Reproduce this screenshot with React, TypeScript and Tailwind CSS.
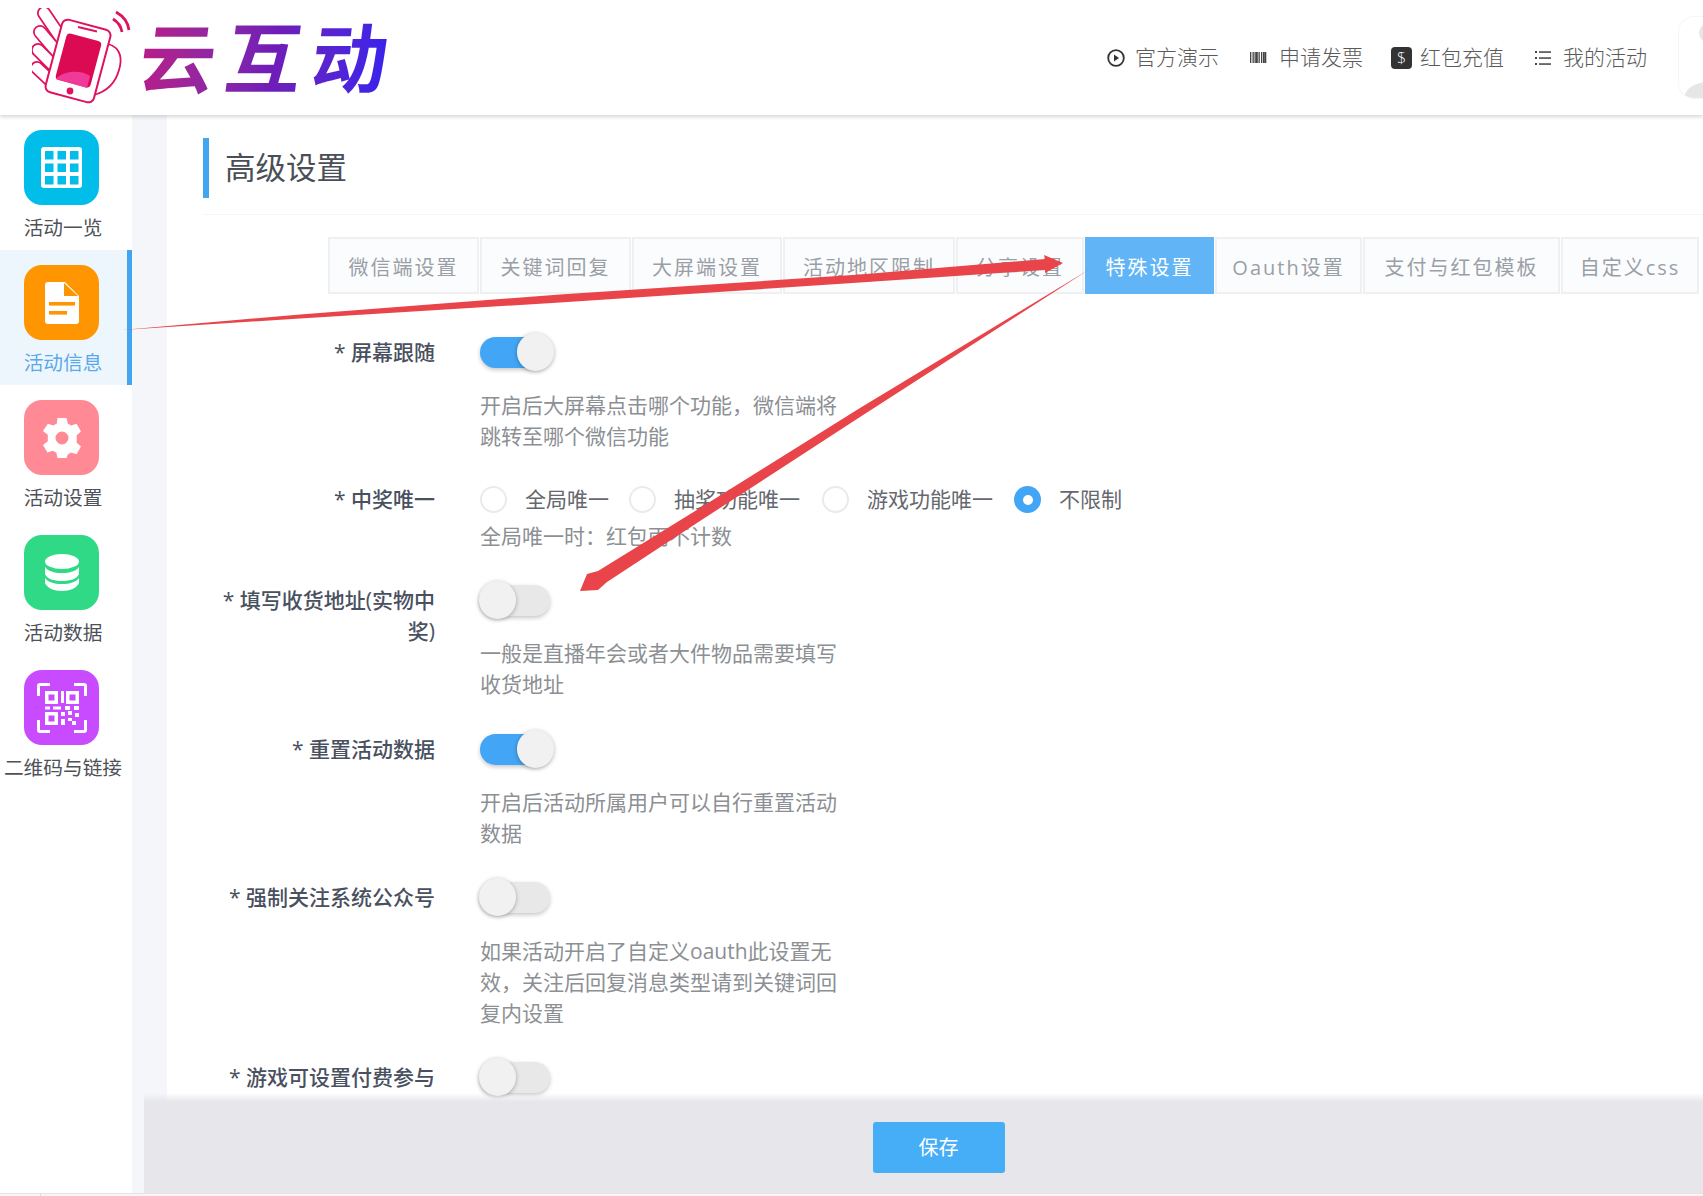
import React from "react";

const Tile = ({ color, children }: { color: string; children: React.ReactNode }) => (
  <div className={`flex h-[75px] w-[75px] items-center justify-center rounded-[18px] ${color}`}>{children}</div>
);

const GridIcon = () => (
  <svg width="41" height="41" viewBox="0 0 41 41">
    <rect width="41" height="41" rx="3" fill="#fff" />
    {[4, 16.5, 29].map((y) =>
      [4, 16.5, 29].map((x) => <rect key={`${x}-${y}`} x={x} y={y} width="8.5" height="8.5" fill="#00bdea" />)
    )}
  </svg>
);
const DocIcon = () => (
  <svg width="34" height="42" viewBox="0 0 34 42">
    <path d="M3 0H20L34 14V39a3 3 0 0 1-3 3H3a3 3 0 0 1-3-3V3a3 3 0 0 1 3-3Z" fill="#fff" />
    <path d="M19 1L33 14H19Z" fill="#ff9500" />
    <rect x="4" y="20" width="26" height="3.6" fill="#ff9500" />
    <rect x="4" y="29" width="18" height="3.6" fill="#ff9500" />
  </svg>
);
const GearIcon = () => (
  <svg width="42" height="42" viewBox="0 0 42 42">
    <path
      fill="#fff"
      fillRule="evenodd"
      d="M16.5 1h9l1.2 5.6 3.4 2 5.5-1.8 4.4 7.6-4.3 3.8v7.600l4.300 3.800-4.400 7.600-5.500-1.800-3.400 2L25.500 41h-9l-1.200-5.200-3.400-2-5.500 1.800L2 28l4.800-3.800v-6.400L2 14l4.900-7.200 5.500 1.800 3.400-2L16.500 1ZM21 14.500a6.500 6.500 0 1 0 0 13 6.500 6.500 0 0 0 0-13Z"
    />
  </svg>
);
const DbIcon = () => (
  <svg width="34" height="37" viewBox="0 0 34 37">
    <ellipse cx="17" cy="7.5" rx="17" ry="7.5" fill="#fff" />
    <path d="M0 13c3 4 9 6 17 6s14-2 17-6v7c-2 5-9 7-17 7s-15-2-17-7Z" fill="#fff" />
    <path d="M0 24c3 4 9 6 17 6s14-2 17-6v5c-2 5-9 8-17 8s-15-3-17-8Z" fill="#fff" />
  </svg>
);
const QrIcon = () => (
  <svg width="50" height="50" viewBox="0 0 50 50" fill="#fff">
    <path d="M0 13V3a3 3 0 0 1 3-3h10v3H3v10ZM37 0h10a3 3 0 0 1 3 3v10h-3V3H37ZM0 37h3v10h10v3H3a3 3 0 0 1-3-3ZM47 37h3v10a3 3 0 0 1-3 3H37v-3h10Z" />
    <path fillRule="evenodd" d="M8 8h13v13H8Zm3.500 3.500v6h6v-6ZM29 8h13v13H29Zm3.500 3.500v6h6v-6ZM8 29h13v13H8Zm3.500 3.500v6h6v-6Z" />
    <path d="M24 8h3v12h-3ZM8 23.500h5v3H8ZM16 23.500h8v3h-8ZM28 23h5v4h-5ZM37 23h5v4h-5ZM24 29h4v4h-4ZM31 28h4v4h-4ZM38 30h4v4h-4ZM24 36h4v6h-4ZM31 35h4v3h-4ZM35 38h4v4h-4Z" />
  </svg>
);

const nav = [
  { label: "活动一览", color: "bg-[#00bdea]", icon: <GridIcon /> },
  { label: "活动信息", color: "bg-[#ff9500]", icon: <DocIcon />, active: true },
  { label: "活动设置", color: "bg-[#ff8a96]", icon: <GearIcon /> },
  { label: "活动数据", color: "bg-[#2fd986]", icon: <DbIcon /> },
  { label: "二维码与链接", color: "bg-[#c84bff]", icon: <QrIcon /> },
];

const tabs = [
  { t: "微信端设置", w: "w-[151px]" },
  { t: "关键词回复", w: "w-[151px]" },
  { t: "大屏端设置", w: "w-[150px]" },
  { t: "活动地区限制", w: "w-[172px]" },
  { t: "分享设置", w: "w-[128px]" },
  { t: "特殊设置", w: "w-[129px]", active: true },
  { t: "Oauth设置", w: "w-[147px]" },
  { t: "支付与红包模板", w: "w-[197px]" },
  { t: "自定义css", w: "w-[138px]" },
];

const Finger = ({ d }: { d: string }) => (
  <>
    <path d={d} stroke="#e0115f" strokeWidth="14" strokeLinecap="round" fill="none" />
    <path d={d} stroke="#fff" strokeWidth="10.500" strokeLinecap="round" fill="none" />
  </>
);

const Logo = () => (
  <div className="flex items-center">
    <svg width="100" height="100" viewBox="0 0 100 100" className="shrink-0">
      <path d="M76 36C90 40 90 52 87 62C84 73 76 83 62 87" fill="#fff" stroke="#e0115f" strokeWidth="1.800" />
      <Finger d="M12 5L29 30" />
      <Finger d="M8 24L25 44" />
      <Finger d="M6 42L24 60" />
      <Finger d="M5 60L22 76" />
      <rect x="21" y="15.500" width="50" height="75" rx="6" transform="rotate(15 46 53)" fill="#fff" stroke="#e0115f" strokeWidth="2" />
      <rect x="28.500" y="28.500" width="36" height="48" rx="4" transform="rotate(15 46.500 52.500)" fill="#dc0a52" />
      <path d="M24 71C32 62 50 62 58 68L55 80Z" fill="#f03a9a" />
      <circle cx="38" cy="83" r="3.400" fill="#e0115f" />
      <path d="M46 19L65 23.500" stroke="#e0115f" strokeWidth="1.800" />
      <path d="M81 11C86 14 89 18 90 24M84 4C91 8 96 14 97 22" fill="none" stroke="#e0115f" strokeWidth="2.800" />
    </svg>
    <span className="ml-[8px] inline-block -skew-x-[7deg] bg-gradient-to-r from-[#b81a88] via-[#6f1cb8] to-[#2a1ff5] bg-clip-text pr-[10px] text-[76px] font-bold leading-[96px] tracking-[10px] text-transparent">
      云互动
    </span>
  </div>
);

const PlayIcon = () => (
  <svg width="18" height="18" viewBox="0 0 18 18" className="shrink-0">
    <circle cx="9" cy="9" r="7.800" fill="none" stroke="#333" strokeWidth="1.800" />
    <path d="M7 5.500l5 3.500-5 3.500Z" fill="#333" />
  </svg>
);
const BarcodeIcon = () => (
  <svg width="17" height="11" viewBox="0 0 17 11" className="shrink-0" fill="#444">
    {[0, 2.5, 4.5, 6, 8.5, 11, 13, 15].map((x) => (
      <rect key={x} x={x} y="0" width={x === 6 || x === 13 ? 1.8 : 1.3} height="11" />
    ))}
  </svg>
);
const DollarIcon = () => (
  <div className="flex h-[22px] w-[21px] shrink-0 items-center justify-center rounded-[4px] bg-[#333] text-[16px] leading-none text-white">
    $
  </div>
);
const ListIcon = () => (
  <svg width="16" height="16" viewBox="0 0 16 16" fill="#444" className="shrink-0">
    <rect x="0" y="1" width="2" height="2" />
    <rect x="0" y="7" width="2" height="2" />
    <rect x="0" y="13" width="2" height="2" />
    <rect x="4" y="1.300" width="12" height="1.500" />
    <rect x="4" y="7.300" width="12" height="1.500" />
    <rect x="4" y="13.300" width="12" height="1.500" />
  </svg>
);

const Switch = ({ on }: { on?: boolean }) => (
  <div
    className={`relative h-[31px] w-[70px] rounded-full shadow-[0_2px_4px_rgba(0,0,0,0.22)] ${
      on ? "bg-[#42a5f5]" : "bg-[#e8e8e8]"
    }`}
  >
    <div
      className={`absolute top-[-4px] h-[38px] w-[37px] rounded-full bg-[#f1f1f1] shadow-[0_1px_4px_rgba(0,0,0,0.3)] ${
        on ? "right-[-4px]" : "left-[-1px]"
      }`}
    />
  </div>
);

const Radio = ({ label, on, w }: { label: string; on?: boolean; w: string }) => (
  <div className={`flex items-center ${w}`}>
    {on ? (
      <div className="flex h-[27px] w-[27px] items-center justify-center rounded-full bg-[#42a5f5]">
        <div className="h-[10px] w-[10px] rounded-full bg-white" />
      </div>
    ) : (
      <div className="h-[27px] w-[27px] rounded-full border-2 border-[#e9eaec] bg-white" />
    )}
    <span className="ml-[18px] whitespace-nowrap">{label}</span>
  </div>
);

const Row = ({
  label,
  control,
  help,
  helpGap = "mt-[22px]",
  mb = "mb-[32px]",
}: {
  label: string;
  control: React.ReactNode;
  help?: string[];
  helpGap?: string;
  mb?: string;
}) => (
  <div className={`flex ${mb}`}>
    <div className="w-[232px] shrink-0 text-right text-[21px] font-medium leading-[31px] text-[#495060]">{label}</div>
    <div className="ml-[45px]">
      <div className="flex h-[31px] items-center text-[21px] text-[#65686e]">{control}</div>
      {help && (
        <div className={`${helpGap} text-[21px] leading-[31px] text-[#8c8f94]`}>
          {help.map((h) => (
            <div key={h} className="whitespace-nowrap">
              {h}
            </div>
          ))}
        </div>
      )}
    </div>
  </div>
);

export default function App() {
  return (
    <div className="relative h-[1196px] w-full overflow-hidden bg-white font-['Open_Sans','Noto_Sans_CJK_SC',sans-serif]">
      <header className="relative z-20 flex h-[115px] items-center overflow-hidden bg-white pl-[32px] shadow-[0_2px_4px_rgba(0,0,0,0.16)]">
        <Logo />
        <div className="ml-auto flex items-center text-[21px] font-light text-[#5a5a5a]">
          <div className="flex items-center gap-[10px]">
            <PlayIcon />
            <span>官方演示</span>
          </div>
          <div className="ml-[31px] flex items-center gap-[12px]">
            <BarcodeIcon />
            <span>申请发票</span>
          </div>
          <div className="ml-[28px] flex items-center gap-[8px]">
            <DollarIcon />
            <span>红包充值</span>
          </div>
          <div className="ml-[31px] flex items-center gap-[12px]">
            <ListIcon />
            <span>我的活动</span>
          </div>
          <div className="ml-[31px] h-[83px] w-[25px] overflow-hidden rounded-l-[16px] border border-r-0 border-[#f6f6f6]">
            <svg width="25" height="83" viewBox="0 0 25 83">
              <circle cx="30" cy="16" r="10" fill="#e6e6e6" />
              <path d="M5 83c0-10 8-16 20-18v18Z" fill="#e6e6e6" />
            </svg>
          </div>
        </div>
      </header>

      <div className="flex h-[1078px]">
        <aside className="w-[132px] shrink-0 bg-white">
          {nav.map((n) => (
            <div
              key={n.label}
              className={`relative h-[135px] w-[132px] pt-[15px] ${
                n.active ? "border-r-[5px] border-[#42a5f0] bg-[#eef6fd]" : ""
              }`}
            >
              <div className="pl-[24px]">
                <Tile color={n.color}>{n.icon}</Tile>
              </div>
              <div
                className={`mt-[8px] w-[126px] whitespace-nowrap text-center text-[19.700px] leading-[30px] ${
                  n.active ? "text-[#5aa9ea]" : "text-[#4e5258]"
                }`}
              >
                {n.label}
              </div>
            </div>
          ))}
        </aside>

        <main className="relative min-w-0 flex-1 bg-[#f5f6fa] pl-[35px]">
          <div className="h-full overflow-hidden bg-white pl-[36px] pt-[23px]">
            <div className="border-b border-[#f4f5f7] pb-[16px]">
              <div className="flex h-[60px] items-center border-l-[6px] border-[#42a5f0] pl-[16px] text-[30.500px] text-[#4a4f57]">
                高级设置
              </div>
            </div>
            <div className="ml-[125px] mt-[22px] flex gap-[1px]">
              {tabs.map((t) => (
                <div
                  key={t.t}
                  className={`flex h-[57px] shrink-0 items-center justify-center whitespace-nowrap pt-[4px] text-[20px] tracking-[2px] ${t.w} ${
                    t.active
                      ? "bg-[#61b5f7] text-white"
                      : "border-2 border-[#eef0f2] bg-[#fbfcfe] text-[#9a9fa6]"
                  }`}
                >
                  {t.t}
                </div>
              ))}
            </div>

            <div className="mt-[43px]">
              <Row label="* 屏幕跟随" control={<Switch on />} help={["开启后大屏幕点击哪个功能，微信端将", "跳转至哪个微信功能"]} />
              <Row
                label="* 中奖唯一"
                helpGap="mt-[6px]"
                mb="mb-[33px]"
                control={
                  <>
                    <Radio label="全局唯一" w="w-[149px]" />
                    <Radio label="抽奖功能唯一" w="w-[193px]" />
                    <Radio label="游戏功能唯一" w="w-[192px]" />
                    <Radio label="不限制" on w="w-[120px]" />
                  </>
                }
                help={["全局唯一时：红包雨不计数"]}
              />
              <Row
                label="* 填写收货地址(实物中奖)"
                mb="mb-[34px]"
                control={<Switch />}
                help={["一般是直播年会或者大件物品需要填写", "收货地址"]}
              />
              <Row
                label="* 重置活动数据"
                mb="mb-[33px]"
                control={<Switch on />}
                help={["开启后活动所属用户可以自行重置活动", "数据"]}
              />
              <Row
                label="* 强制关注系统公众号"
                helpGap="mt-[23px]"
                mb="mb-[33px]"
                control={<Switch />}
                help={["如果活动开启了自定义oauth此设置无", "效，关注后回复消息类型请到关键词回", "复内设置"]}
              />
              <Row label="* 游戏可设置付费参与" control={<Switch />} />
            </div>
          </div>
        </main>
      </div>

      <div className="absolute bottom-[3px] left-[144px] right-0 z-10 flex h-[91px] items-start justify-center bg-[#e6e6eb] pl-[30px] pt-[20px]">
        <div className="absolute left-0 right-0 top-[-9px] h-[9px] bg-gradient-to-b from-transparent to-[#e6e6eb]" />
        <button className="flex h-[51px] w-[132px] items-center justify-center rounded-[3px] bg-[#46aef7] text-[20px] text-white">
          保存
        </button>
      </div>

      <div className="h-[3px] border-t border-[#e4e4e6] bg-[#f6f6f7]">
        <div className="ml-[40px] h-full w-[1px] bg-[#dcdcde]" />
      </div>

      <svg className="pointer-events-none absolute left-0 top-0 z-30 h-[1196px] w-[1703px]" viewBox="0 0 1703 1196">
        <path
          d="M122 330 L300 314.500 L560 294.500 L860 274.500 L1045 259 L1044 255 L1063 263 L1045 273 L1045 270 L860 282.500 L560 302.500 L300 318.500 Z"
          fill="#e8444a"
        />
        <path
          d="M1090 269 L860 408 L700 508 L598 571 L587 574 L580 591 L598 590 L607 582 L700 521 L860 417 Z"
          fill="#e8444a"
        />
      </svg>
    </div>
  );
}
